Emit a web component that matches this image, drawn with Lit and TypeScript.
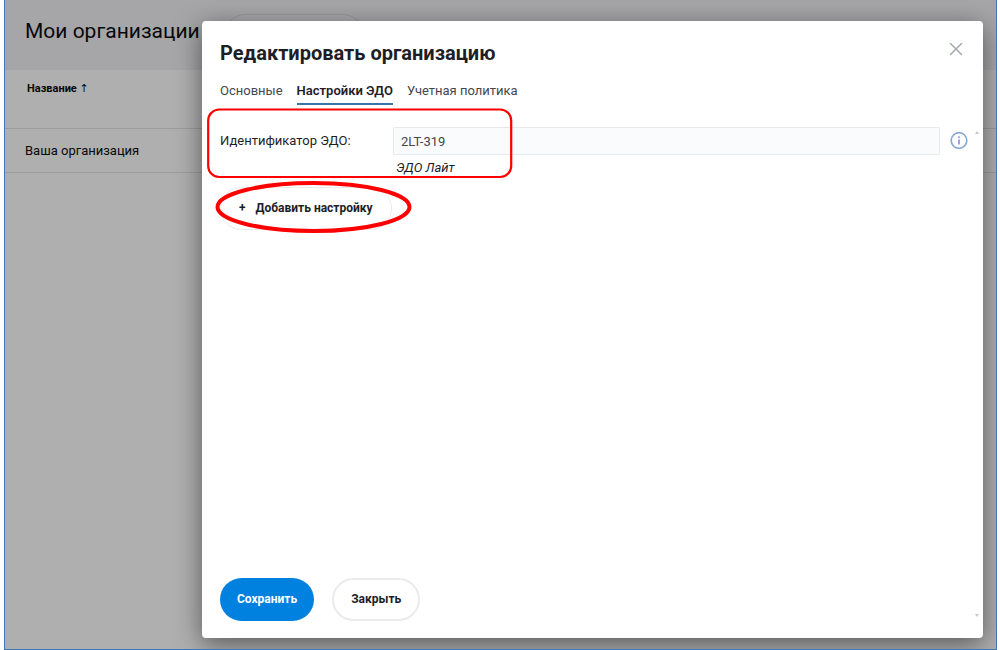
import { LitElement, html, css, svg } from "lit";
import { customElement, state } from "lit/decorators.js";

@customElement("edit-organization-dialog")
export class EditOrganizationDialog extends LitElement {
  static styles = css`
    :host {
      display: flex;
      flex-direction: column;
      flex: 1;
      box-sizing: border-box;
      position: relative;
      padding: 16px 15px 17px 18px;
      background: #fff;
      border-radius: 4px;
      box-shadow: 0 6px 26px rgba(0, 0, 0, 0.5);
      color: #1d1e26;
      font-size: 13px;
      line-height: 18px;
    }
    button,
    input {
      font: inherit;
      color: inherit;
      box-sizing: border-box;
      margin: 0;
    }
    button {
      cursor: pointer;
    }
    .head {
      display: flex;
      justify-content: space-between;
      align-items: flex-start;
    }
    .title {
      margin: 0;
      font-size: 20px;
      line-height: 32px;
      font-weight: 700;
    }
    .close {
      display: flex;
      margin: 4px 4px 0 0;
      padding: 0;
      border: 0;
      background: none;
    }
    .tabs {
      display: flex;
      gap: 14px;
      margin-top: 13px;
    }
    .tab {
      padding: 0 0 3px;
      border: 0;
      border-bottom: 2px solid transparent;
      background: none;
      color: #45464e;
    }
    .tab.active {
      border-color: #3a74a8;
      color: #1d1e26;
      font-weight: 600;
    }
    .row {
      display: grid;
      grid-template-columns: 173px 1fr 28px;
      align-items: center;
      margin-top: 22px;
    }
    .field {
      width: 100%;
      height: 28px;
      padding: 0 7px;
      border: 1px solid #e8e9ec;
      border-radius: 1px;
      background: #fafbfd;
      color: #45464e;
      outline: none;
    }
    .info {
      justify-self: end;
      display: flex;
      padding: 0;
      border: 0;
      background: none;
    }
    .hint {
      margin: 4px 0 0 176px;
      font-style: italic;
    }
    .pill {
      height: 43px;
      padding: 0 17px 2px;
      border: 2px solid #ebebed;
      border-radius: 22px;
      background: #fff;
      font-size: 12px;
      font-weight: 700;
    }
    .add {
      align-self: flex-start;
      display: flex;
      align-items: center;
      gap: 10px;
      margin-top: 10px;
      padding: 0 18px 2px;
      border-width: 1px;
    }
    .actions {
      display: flex;
      gap: 18px;
      margin-top: auto;
    }
    .primary {
      background: #0080df;
      border: 0;
      color: #fff;
    }
    .mark {
      position: absolute;
      overflow: visible;
      pointer-events: none;
      fill: none;
      stroke: #fe0000;
    }
    .mark-field {
      left: 5px;
      top: 87px;
    }
    .mark-add {
      left: 13px;
      top: 160px;
    }
    .scroll {
      position: absolute;
      right: 4px;
      fill: #c9c9cd;
    }
    .up {
      top: 110px;
    }
    .down {
      bottom: 21px;
    }
  `;

  private tabs = ["Основные", "Настройки ЭДО", "Учетная политика"];

  @state() private active = 1;

  render() {
    return html`
      <header class="head">
        <h2 class="title">Редактировать организацию</h2>
        <button class="close" aria-label="Закрыть окно">
          <svg width="16" height="16" viewBox="0 0 16 16">
            <path d="M2.5 2.5 13.5 13.5M13.5 2.5 2.5 13.5" fill="none" stroke="#a9abb4" stroke-width="1.6" stroke-linecap="round" />
          </svg>
        </button>
      </header>
      <nav class="tabs" role="tablist">
        ${this.tabs.map(
          (name, i) => html`<button
            class="tab ${i === this.active ? "active" : ""}"
            role="tab"
            aria-selected=${i === this.active}
            @click=${() => (this.active = i)}
          >${name}</button>`
        )}
      </nav>
      <div class="row">
        <label for="edo">Идентификатор ЭДО:</label>
        <input id="edo" class="field" value="2LT-319" readonly />
        <button class="info" aria-label="Справка">
          <svg width="18" height="18" viewBox="0 0 18 18">
            <circle cx="9" cy="8.5" r="7.8" fill="#fff" stroke="#86a6d4" stroke-width="1.6" />
            <circle cx="9" cy="5.2" r="1" fill="#8a9bd8" />
            <path d="M9 7.6v4.8" stroke="#9a94d8" stroke-width="1.8" />
          </svg>
        </button>
      </div>
      <div class="hint">ЭДО Лайт</div>
      <button class="pill add"><span>+</span><span>Добавить настройку</span></button>
      <footer class="actions">
        <button class="pill primary">Сохранить</button>
        <button class="pill">Закрыть</button>
      </footer>
      <svg class="scroll up" width="4" height="3" viewBox="0 0 4 3"><path d="M0 3 2 0 4 3z" /></svg>
      <svg class="scroll down" width="4" height="3" viewBox="0 0 4 3"><path d="M0 0 2 3 4 0z" /></svg>
      <svg class="mark mark-field" width="305" height="70" viewBox="0 0 305 70">
        ${svg`<rect x="1.2" y="1.5" width="303" height="67.5" rx="11" stroke-width="2.2" />`}
      </svg>
      <svg class="mark mark-add" width="197" height="52" viewBox="0 0 197 52">
        ${svg`<ellipse cx="98.5" cy="26" rx="96" ry="24" stroke-width="4" />`}
      </svg>
    `;
  }
}

@customElement("app-root")
export class AppRoot extends LitElement {
  static styles = css`
    :host {
      display: block;
      padding: 0 3px 0 4px;
      background: #fff;
      font-family: Roboto, "Liberation Sans", sans-serif;
    }
    .frame {
      position: relative;
      overflow: hidden;
      box-sizing: border-box;
      height: 100vh;
      border: 1px solid #3f78b4;
      border-top: 0;
      background: #afafaf;
      color: #08080a;
    }
    .top {
      display: flex;
      align-items: flex-start;
      gap: 24px;
      box-sizing: border-box;
      height: 70px;
      padding: 14px 20px 0;
      background: #a6a6a9;
    }
    .page-title {
      margin: 0;
      font-size: 21px;
      line-height: 34px;
      font-weight: 400;
    }
    .create {
      box-sizing: border-box;
      width: 140px;
      height: 43px;
      border: 1px solid #98989b;
      border-radius: 22px;
      background: #a9a9ab;
    }
    .list {
      width: 100%;
      border-collapse: collapse;
      text-align: left;
    }
    .list th {
      height: 58px;
      padding: 10px 22px;
      box-sizing: border-box;
      vertical-align: top;
      border-bottom: 1px solid #9c9c9c;
      font-size: 11px;
      line-height: 18px;
      font-weight: 700;
    }
    .arrow {
      font-family: "DejaVu Sans", sans-serif;
      font-weight: 400;
      line-height: 1;
    }
    .list td {
      height: 44px;
      padding: 1px 20px 0;
      box-sizing: border-box;
      border-bottom: 1px solid #9c9c9c;
      font-size: 13px;
      line-height: 18px;
    }
    .overlay {
      position: absolute;
      inset: 0;
      display: flex;
      padding: 21px 13px 11px 197px;
    }
  `;

  render() {
    return html`
      <div class="frame">
        <header class="top">
          <h1 class="page-title">Мои организации</h1>
          <button class="create" aria-label="Добавить"></button>
        </header>
        <table class="list">
          <thead>
            <tr><th>Название <span class="arrow">↑</span></th></tr>
          </thead>
          <tbody>
            <tr><td>Ваша организация</td></tr>
          </tbody>
        </table>
        <div class="overlay">
          <edit-organization-dialog role="dialog" aria-label="Редактировать организацию"></edit-organization-dialog>
        </div>
      </div>
    `;
  }
}
